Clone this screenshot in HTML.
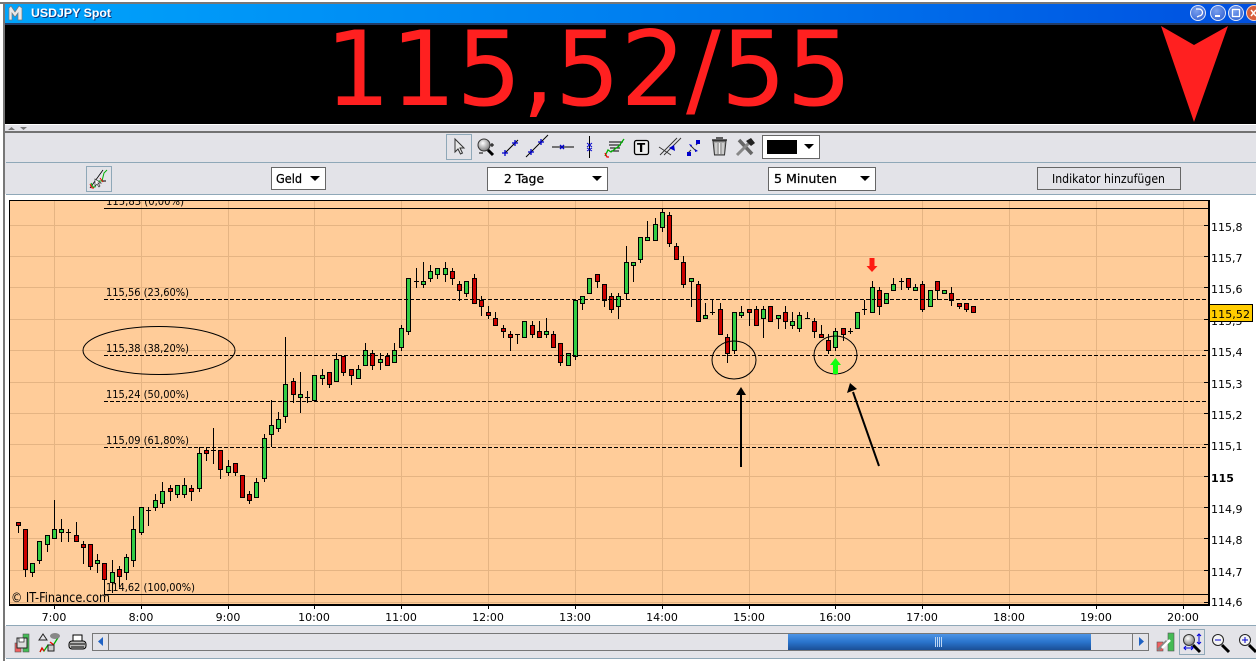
<!DOCTYPE html>
<html><head><meta charset="utf-8"><title>USDJPY Spot</title>
<style>html,body{margin:0;padding:0;background:#fff;width:1256px;height:661px;overflow:hidden}svg{display:block}text{font-family:"DejaVu Sans",sans-serif;fill:#000}</style></head>
<body>
<svg xmlns="http://www.w3.org/2000/svg" width="1256" height="661" viewBox="0 0 1256 661">
<defs>
<linearGradient id="tb" x1="0" x2="1" y1="0" y2="0"><stop offset="0" stop-color="#00a4fb"/><stop offset=".6" stop-color="#0078ee"/><stop offset="1" stop-color="#0050e0"/></linearGradient>
<linearGradient id="th" x1="0" x2="0" y1="0" y2="1"><stop offset="0" stop-color="#4d94e6"/><stop offset=".5" stop-color="#2a74cc"/><stop offset="1" stop-color="#1a4f96"/></linearGradient>
<radialGradient id="bt" cx=".4" cy=".35" r=".8"><stop offset="0" stop-color="#7aa0ee"/><stop offset="1" stop-color="#2a5cd0"/></radialGradient>
<radialGradient id="mg" cx=".4" cy=".35" r=".7"><stop offset="0" stop-color="#fff"/><stop offset="1" stop-color="#777"/></radialGradient>
<clipPath id="cb"><rect x="10" y="201" width="1198" height="403"/></clipPath>
</defs>
<rect width="1256" height="661" fill="#fff"/>
<rect x="0" y="2" width="1256" height="2" fill="#777"/>
<rect x="3" y="2" width="2" height="659" fill="#777"/>
<rect x="5" y="4" width="1251" height="20" fill="url(#tb)"/>
<rect x="5" y="23" width="1251" height="2" fill="#233c66"/>
<path d="M9 20V8l2-2 4 6 4-6 3 2v12h-4v-7l-3 4-3-4v7z" fill="#e8e8e8" stroke="#777" stroke-width=".7"/>
<text x="31" y="17" font-size="12" font-weight="bold" textLength="80" lengthAdjust="spacingAndGlyphs" style="fill:#10357a;font-family:'Liberation Sans',sans-serif" dx="1" dy="1">USDJPY Spot</text>
<text x="31" y="17" font-size="12" font-weight="bold" textLength="80" lengthAdjust="spacingAndGlyphs" style="fill:#fff;font-family:'Liberation Sans',sans-serif">USDJPY Spot</text>
<g stroke="#dfe8fa" stroke-width="1" fill="url(#bt)"><circle cx="1198" cy="13" r="7.5"/><circle cx="1218" cy="13" r="7.5"/><circle cx="1236" cy="13" r="7.5"/></g>
<circle cx="1254" cy="13" r="7.5" fill="#d8603c" stroke="#f0d8d0"/>
<path d="M1196 9h3a3 3 0 0 1 0 7l-2 1" fill="none" stroke="#fff" stroke-width="1.3"/>
<rect x="1215" y="15" width="5" height="2" fill="#fff"/>
<rect x="1232.5" y="9.500" width="7" height="7" fill="none" stroke="#fff" stroke-width="1.300"/>
<path d="M1251 10l5 6M1256 10l-5 6" stroke="#fff" stroke-width="1.500"/>
<rect x="5" y="25" width="1251" height="99" fill="#000"/>
<text x="325" y="105" font-size="103" textLength="527" lengthAdjust="spacingAndGlyphs" style="fill:#ff2020">115,52/55</text>
<polygon points="1161,26 1194,45 1228,26 1194,122" fill="#ff2020"/>
<rect x="5" y="125" width="1251" height="6" fill="#e3e3e8"/>
<path d="M8 130l3.500-3 3.500 3zM20 127h7l-3.500 3z" fill="#777"/>
<rect x="5" y="131" width="1251" height="2" fill="#727272"/>
<rect x="5" y="133" width="1251" height="61" fill="#e3e3e8"/>
<rect x="6" y="162" width="1250" height="1" fill="#8fa8b8"/>
<rect x="6" y="194" width="1250" height="1" fill="#8fa8b8"/>
<!-- main toolbar -->
<rect x="446.500" y="134.500" width="25" height="25" fill="#e3e3e8" stroke="#8fa8b8"/>
<path d="M455 139v13l3-3 2.500 5 2-1-2.500-5h4z" fill="#e8e8e8" stroke="#333"/>
<circle cx="484" cy="145" r="6" fill="url(#mg)" stroke="#333"/>
<path d="M488 150l5 5" stroke="#000" stroke-width="3"/>
<path d="M490 145h4M492 143v4M479 153h4" stroke="#000"/>
<path d="M505 153l13-13" stroke="#000"/>
<path d="M505 150v6M502 153h6M515 140v6M512 143h6" stroke="#00c" stroke-width="1.300"/>
<path d="M526 157l22-22" stroke="#000"/>
<path d="M531 149v6M528 152h6M541 139v6M538 142h6" stroke="#00c" stroke-width="1.300"/>
<path d="M552 147h22" stroke="#000"/>
<path d="M560 145l4 4M564 145l-4 4" stroke="#00c" stroke-width="1.300"/>
<path d="M589.500 136v22" stroke="#000"/>
<path d="M587 143l5 4M592 143l-5 4M587 148l5 3M592 148l-5 3" stroke="#00c" stroke-width="1"/>
<path d="M609 142h14M609 145h12M610 148h10M611 151h8" stroke="#000"/>
<path d="M605 156l3-6 3 2 4-3 4-3 5-7" fill="none" stroke="#00b000" stroke-width="1.300"/>
<path d="M605 153l2 4h2" fill="none" stroke="#e00" stroke-width="1.300"/>
<rect x="634.500" y="140.500" width="14" height="14" rx="2" fill="#eee" stroke="#000" stroke-width="1.300"/>
<text x="637" y="152" font-size="12" font-weight="bold">T</text>
<path d="M660 155l17-17M659 147l12 8M664 155l17-17" stroke="#333" stroke-width=".9"/>
<path d="M669 148l5-3 1 6z" fill="#00c"/>
<path d="M688 153l3-3M696 145l3-3M691 146l5 5" stroke="#333"/>
<rect x="687" y="152" width="4" height="4" fill="#00c"/><rect x="696" y="140" width="4" height="4" fill="#00c"/>
<path d="M695 149l3 2-3 1zM692 145l-3-1 2 3z" fill="#00c"/>
<path d="M713 141h13l-1.500 14h-10z" fill="#aaa" stroke="#333"/>
<path d="M716 143v11M719.500 143v11M723 143v11" stroke="#eee"/>
<path d="M712 140h15M716 138h7" stroke="#333" stroke-width="1.500"/>
<path d="M739 140l13 14" stroke="#666" stroke-width="3.500"/>
<path d="M737 155l12-12" stroke="#888" stroke-width="3"/>
<path d="M746 141l5-3 4 5-4 3z" fill="#222"/>
<rect x="762.500" y="135.500" width="57" height="23" fill="#fff" stroke="#666"/>
<rect x="767" y="140" width="30" height="14" fill="#000"/>
<path d="M804 144h10l-5 5z" fill="#000"/>
<!-- row 2 -->
<rect x="86.500" y="166.500" width="25" height="25" fill="#e3e3e8" stroke="#8fa8b8"/>
<path d="M90 188l13-18" stroke="#000" stroke-width=".8"/>
<path d="M99 181h7" stroke="#000"/>
<path d="M91 183l2 4h2l2-5 2-1h3l2-8 3-3" fill="none" stroke="#00b000"/>
<path d="M90 184l2 4h2M100 178l3 4" fill="none" stroke="#e00"/>
<path d="M95 179v7l2-2 2 3 1-1-2-3h3z" fill="#fff" stroke="#333" stroke-width=".7"/>
<g fill="#fff" stroke="#666"><rect x="271.500" y="167.500" width="54" height="22"/><rect x="487.500" y="167.500" width="120" height="23"/><rect x="768.500" y="167.500" width="107" height="23"/></g>
<text x="276" y="183" font-size="12" textLength="26" lengthAdjust="spacingAndGlyphs" stroke="#000" stroke-width=".25">Geld</text>
<path d="M310 176h10l-5 5z" fill="#000"/>
<text x="504" y="183" font-size="12" textLength="40" lengthAdjust="spacingAndGlyphs" stroke="#000" stroke-width=".25">2 Tage</text>
<path d="M592 176h10l-5 5z" fill="#000"/>
<text x="774" y="183" font-size="12" textLength="63" lengthAdjust="spacingAndGlyphs" stroke="#000" stroke-width=".25">5 Minuten</text>
<path d="M860 176h10l-5 5z" fill="#000"/>
<rect x="1037.500" y="167.500" width="143" height="22" fill="#e3e3e8" stroke="#666"/>
<text x="1052" y="183" font-size="12" textLength="113" lengthAdjust="spacingAndGlyphs">Indikator hinzufügen</text>
<!-- chart -->
<rect x="10" y="201" width="1198" height="403" fill="#ffcc99"/>
<g clip-path="url(#cb)">
<path d="M10 225.500H1208M10 256.500H1208M10 287.500H1208M10 319.500H1208M10 350.500H1208M10 382.500H1208M10 413.500H1208M10 444.500H1208M10 476.500H1208M10 507.500H1208M10 538.500H1208M10 570.500H1208M10 602.500H1208M54.500 201V604M141.500 201V604M228.500 201V604M314.500 201V604M401.500 201V604M488.500 201V604M575.500 201V604M662.500 201V604M749.500 201V604M835.500 201V604M922.500 201V604M1009.500 201V604M1096.500 201V604M1183.500 201V604" stroke="#e5b483" fill="none"/>
<text x="106" y="205" font-size="11" textLength="78" lengthAdjust="spacingAndGlyphs">115,83 (0,00%)</text>
<path fill="none" stroke="#000" d="M18.500 522V533M25.500 569V577M32.500 572V577M39.500 560V564M47.500 544V552M54.500 500V538M61.500 519V542M68.500 529V542M76.500 522V541M83.500 541V564M90.500 566V570M97.500 554V573M104.500 579V594M112.500 560V593M119.500 566V587M126.500 554V580M133.500 516V567M141.500 532V535M148.500 507V526M155.500 494V511M162.500 482V508M170.500 485V501M177.500 494V498M184.500 478V498M191.500 485V501M199.500 447V492M206.500 447V461M213.500 428V464M220.500 469V479M228.500 460V476M235.500 472V476M249.500 491V504M256.500 478V482M264.500 434V482M271.500 400V447M278.500 412V432M285.500 337V423M293.500 378V403M300.500 372V413M307.500 391V403M314.500 400V402M322.500 369V385M329.500 384V388M336.500 353V359M343.500 372V376M351.500 375V385M358.500 365V369M365.500 343V350M372.500 350V370M380.500 353V370M387.500 353V356M394.500 343V350M401.500 325V351M408.500 331V335M416.500 268V288M423.500 262V288M430.500 265V282M437.500 274V279M445.500 262V282M452.500 268V285M459.500 281V301M466.500 293V297M474.500 274V278M481.500 296V316M488.500 306V319M495.500 312V318M503.500 325V338M510.500 331V351M517.500 334V344M532.500 321V338M539.500 321V331M546.500 318V338M553.500 331V334M560.500 362V366M575.500 356V360M582.500 303V310M597.500 281V288M604.500 300V307M611.500 293V313M618.500 293V319M626.500 246V300M633.500 265V282M640.500 259V263M647.500 221V237M655.500 218V224M662.500 208V232M669.500 212V247M676.500 243V246M683.500 256V288M691.500 281V307M698.500 281V284M705.500 303V315M712.500 299V315M720.500 303V309M727.500 334V363M734.500 350V354M741.500 306V318M749.500 312V326M756.500 306V309M763.500 306V338M778.500 318V329M785.500 306V329M792.500 312V329M799.500 312V332M807.500 312V318M814.500 318V338M821.500 325V334M828.500 334V354M835.500 328V351M843.500 334V341M850.500 328V334M864.500 300V315M872.500 281V287M879.500 287V315M893.500 278V284M901.500 278V290M908.500 287V290M915.500 284V287M922.500 281V312M937.500 290V300M951.500 287V306M959.500 306V309M966.500 309V312M66 532.500h5M146 510.500h5M211 450.500h5M305 397.500h5M414 281.500h5M515 334.500h5M710 312.500h5M805 318.500h5M848 331.500h5M862 309.500h5M899 281.500h5"/>
<path fill="#33cc44" stroke="#000" d="M30.500 563.500V572.500h4V563.500zM37.500 541.500V560.500h4V541.500zM45.500 535.500V544.500h4V535.500zM52.500 529.500V538.500h4V529.500zM59.500 529.500V532.500h4V529.500zM95.500 560.500V563.500h4V560.500zM110.500 572.500V582.500h4V572.500zM124.500 557.500V572.500h4V557.500zM131.500 529.500V560.500h4V529.500zM139.500 507.500V532.500h4V507.500zM153.500 500.500V507.500h4V500.500zM160.500 491.500V503.500h4V491.500zM175.500 485.500V494.500h4V485.500zM182.500 485.500V494.500h4V485.500zM197.500 453.500V488.500h4V453.500zM226.500 466.500V472.500h4V466.500zM254.500 482.500V497.500h4V482.500zM262.500 438.500V478.500h4V438.500zM269.500 425.500V434.500h4V425.500zM276.500 419.500V428.500h4V419.500zM283.500 384.500V416.500h4V384.500zM298.500 394.500V397.500h4V394.500zM312.500 375.500V400.500h4V375.500zM320.500 375.500V378.500h4V375.500zM334.500 359.500V381.500h4V359.500zM356.500 369.500V378.500h4V369.500zM363.500 350.500V365.500h4V350.500zM378.500 359.500V362.500h4V359.500zM392.500 350.500V362.500h4V350.500zM399.500 328.500V347.500h4V328.500zM406.500 278.500V331.500h4V278.500zM421.500 281.500V284.500h4V281.500zM428.500 271.500V278.500h4V271.500zM435.500 268.500V274.500h4V268.500zM443.500 268.500V274.500h4V268.500zM464.500 281.500V293.500h4V281.500zM522.500 321.500V337.500h4V321.500zM544.500 331.500V334.500h4V331.500zM566.500 353.500V365.500h4V353.500zM573.500 300.500V356.500h4V300.500zM580.500 296.500V303.500h4V296.500zM587.500 278.500V293.500h4V278.500zM616.500 296.500V306.500h4V296.500zM624.500 262.500V293.500h4V262.500zM631.500 262.500V265.500h4V262.500zM638.500 237.500V259.500h4V237.500zM645.500 237.500V240.500h4V237.500zM653.500 224.500V240.500h4V224.500zM660.500 212.500V227.500h4V212.500zM689.500 278.500V281.500h4V278.500zM703.500 315.500V318.500h4V315.500zM732.500 312.500V350.500h4V312.500zM739.500 312.500V315.500h4V312.500zM761.500 309.500V318.500h4V309.500zM776.500 315.500V318.500h4V315.500zM790.500 321.500V325.500h4V321.500zM797.500 315.500V328.500h4V315.500zM833.500 331.500V347.500h4V331.500zM855.500 312.500V328.500h4V312.500zM870.500 287.500V312.500h4V287.500zM884.500 293.500V303.500h4V293.500zM891.500 284.500V290.500h4V284.500zM913.500 287.500V290.500h4V287.500zM928.500 290.500V306.500h4V290.500zM942.500 290.500V293.500h4V290.500z"/>
<path fill="#cc0000" stroke="#000" d="M16.500 522.500V525.500h4V522.500zM23.500 529.500V569.500h4V529.500zM74.500 535.500V541.500h4V535.500zM81.500 544.500V547.500h4V544.500zM88.500 544.500V566.500h4V544.500zM102.500 563.500V579.500h4V563.500zM117.500 569.500V576.500h4V569.500zM168.500 488.500V491.500h4V488.500zM189.500 488.500V491.500h4V488.500zM204.500 450.500V453.500h4V450.500zM218.500 450.500V469.500h4V450.500zM233.500 463.500V472.500h4V463.500zM240.500 475.500V497.500h4V475.500zM247.500 494.500V500.500h4V494.500zM291.500 381.500V394.500h4V381.500zM327.500 372.500V384.500h4V372.500zM341.500 356.500V372.500h4V356.500zM349.500 369.500V375.500h4V369.500zM370.500 353.500V365.500h4V353.500zM385.500 356.500V365.500h4V356.500zM450.500 271.500V278.500h4V271.500zM457.500 284.500V290.500h4V284.500zM472.500 278.500V303.500h4V278.500zM479.500 300.500V306.500h4V300.500zM486.500 312.500V315.500h4V312.500zM493.500 318.500V325.500h4V318.500zM501.500 328.500V331.500h4V328.500zM508.500 334.500V337.500h4V334.500zM530.500 325.500V334.500h4V325.500zM537.500 331.500V337.500h4V331.500zM551.500 334.500V347.500h4V334.500zM558.500 343.500V362.500h4V343.500zM595.500 274.500V281.500h4V274.500zM602.500 284.500V300.500h4V284.500zM609.500 296.500V309.500h4V296.500zM667.500 215.500V243.500h4V215.500zM674.500 246.500V259.500h4V246.500zM681.500 262.500V284.500h4V262.500zM696.500 284.500V321.500h4V284.500zM718.500 309.500V334.500h4V309.500zM725.500 337.500V353.500h4V337.500zM747.500 309.500V312.500h4V309.500zM754.500 309.500V325.500h4V309.500zM768.500 306.500V321.500h4V306.500zM783.500 312.500V321.500h4V312.500zM812.500 321.500V331.500h4V321.500zM819.500 334.500V337.500h4V334.500zM826.500 340.500V350.500h4V340.500zM841.500 328.500V334.500h4V328.500zM877.500 290.500V306.500h4V290.500zM906.500 278.500V287.500h4V278.500zM920.500 284.500V309.500h4V284.500zM935.500 281.500V290.500h4V281.500zM949.500 293.500V300.500h4V293.500zM957.500 303.500V306.500h4V303.500zM964.500 303.500V309.500h4V303.500zM971.500 306.500V312.500h4V306.500z"/>
<path d="M104 208.500H1208M104 594.500H1208" stroke="#000" fill="none"/>
<path d="M104 299.500H1208M104 355.500H1208M104 401.500H1208M104 447.500H1208" stroke="#000" stroke-dasharray="4 2" fill="none"/>
<g font-size="11">
<text x="106" y="296" textLength="83" lengthAdjust="spacingAndGlyphs">115,56 (23,60%)</text>
<text x="106" y="352" textLength="83" lengthAdjust="spacingAndGlyphs">115,38 (38,20%)</text>
<text x="106" y="398" textLength="83" lengthAdjust="spacingAndGlyphs">115,24 (50,00%)</text>
<text x="106" y="444" textLength="83" lengthAdjust="spacingAndGlyphs">115,09 (61,80%)</text>
<text x="106" y="591" textLength="89" lengthAdjust="spacingAndGlyphs">114,62 (100,00%)</text>
</g>
<text x="11" y="602" font-size="13" textLength="99" lengthAdjust="spacingAndGlyphs">© IT-Finance.com</text>
<g fill="none" stroke="#000" stroke-width="1"><ellipse cx="159" cy="350.500" rx="76" ry="24"/><ellipse cx="734" cy="360" rx="22" ry="19"/><ellipse cx="835.500" cy="355" rx="21.500" ry="19"/></g>
<path d="M741 467V392" stroke="#000" stroke-width="2"/>
<path d="M736 395l5-8 5 8z" fill="#000"/>
<path d="M879 466L853 392" stroke="#000" stroke-width="2"/>
<path d="M847 393l3-10 7 6z" fill="#000"/>
<path d="M869.500 258h5v8h3l-5.500 6-5.500-6h3z" fill="#ff1a10"/>
<path d="M833 374v-9h-3l5.500-7 5.500 7h-3v9z" fill="#10ff10"/>
</g>
<!-- frame -->
<rect x="9" y="200" width="1" height="405" fill="#000"/>
<rect x="9" y="200" width="1200" height="1" fill="#000"/>
<rect x="1208" y="200" width="2" height="406" fill="#000"/>
<rect x="9" y="604" width="1201" height="2" fill="#000"/>
<path d="M54.500 606v3M141.500 606v3M228.500 606v3M314.500 606v3M401.500 606v3M488.500 606v3M575.500 606v3M662.500 606v3M749.500 606v3M835.500 606v3M922.500 606v3M1009.500 606v3M1096.500 606v3M1183.500 606v3" stroke="#000"/>
<path d="M1204 225.500h4M1204 256.500h4M1204 287.500h4M1204 319.500h4M1204 350.500h4M1204 382.500h4M1204 413.500h4M1204 444.500h4M1204 476.500h4M1204 507.500h4M1204 538.500h4M1204 570.500h4M1204 602.500h4" stroke="#000"/>
<g font-size="11">
<text x="1211" y="231">115,8</text><text x="1211" y="262">115,7</text><text x="1211" y="293">115,6</text><text x="1211" y="325">115,5</text><text x="1211" y="356">115,4</text><text x="1211" y="388">115,3</text><text x="1211" y="419">115,2</text><text x="1211" y="450">115,1</text><text x="1211" y="482" font-weight="bold">115</text><text x="1211" y="513">114,9</text><text x="1211" y="544">114,8</text><text x="1211" y="576">114,7</text><text x="1211" y="606">114,6</text>
</g>
<rect x="1209.500" y="304.500" width="43" height="17" fill="#ffcc00" stroke="#000"/>
<text x="1211" y="318" font-size="11" textLength="39">115,52</text>
<g font-size="11" text-anchor="middle">
<text x="54" y="621">7:00</text><text x="141" y="621">8:00</text><text x="228" y="621">9:00</text><text x="314" y="621">10:00</text><text x="401" y="621">11:00</text><text x="488" y="621">12:00</text><text x="575" y="621">13:00</text><text x="662" y="621">14:00</text><text x="749" y="621">15:00</text><text x="835" y="621">16:00</text><text x="922" y="621">17:00</text><text x="1009" y="621">18:00</text><text x="1096" y="621">19:00</text><text x="1183" y="621">20:00</text>
</g>
<!-- bottom toolbar -->
<rect x="5" y="626" width="1251" height="32" fill="#e3e3e8"/>
<rect x="6" y="625" width="1250" height="1" fill="#8fa8b8"/>
<rect x="6" y="658" width="1250" height="1" fill="#8fa8b8"/>
<rect x="15" y="643" width="6" height="9" fill="#f06060" stroke="#555" stroke-width=".6"/>
<rect x="23" y="634" width="6" height="18" fill="#44bb55" stroke="#555" stroke-width=".6"/>
<rect x="17" y="638" width="10" height="10" fill="#ddd" stroke="#222"/>
<rect x="19" y="638" width="5" height="4" fill="#fff" stroke="#222" stroke-width=".7"/>
<path d="M39 640l4-6 4 6z" fill="#e3e3e8" stroke="#222"/>
<path d="M40 652l2-4 2 3 4-6 3 3 3-4 5-8" fill="none" stroke="#00b000" stroke-width="1.300"/>
<path d="M40 652l2-4 2 3M50 642l4 3" fill="none" stroke="#e00" stroke-width="1.300"/>
<ellipse cx="55" cy="636" rx="5" ry="3" fill="#888"/>
<rect x="48" y="645" width="6" height="6" fill="#ccc" stroke="#222"/>
<rect x="73" y="635" width="9" height="6" fill="#fff" stroke="#000"/>
<rect x="69" y="641" width="17" height="8" rx="3" fill="#bbb" stroke="#000"/>
<path d="M70 644h15M71 647h13" stroke="#000"/>
<rect x="92.500" y="633.500" width="1056" height="17" fill="#e3e3e8" stroke="#777"/>
<rect x="92.500" y="633.500" width="16" height="17" fill="#e3e3e8" stroke="#777"/>
<path d="M103 637v9l-5-4.500z" fill="#1f62c4"/>
<rect x="788" y="634" width="303" height="16" fill="url(#th)"/>
<path d="M935.500 637v10M937.500 637v10M939.500 637v10M941.500 637v10" stroke="#bcd6f4"/>
<rect x="1132.500" y="633.500" width="16" height="17" fill="#e3e3e8" stroke="#777"/>
<path d="M1139 637v9l5-4.500z" fill="#1f62c4"/>
<rect x="1168" y="633" width="6" height="18" fill="#44bb55" stroke="#555" stroke-width=".6"/>
<rect x="1157" y="642" width="6" height="9" fill="#f06060" stroke="#555" stroke-width=".6"/>
<path d="M1158 650l9-9" stroke="#888" stroke-width="3"/>
<path d="M1162 648l8-8" stroke="#fff" stroke-width="2.500"/>
<rect x="1179.500" y="629.500" width="25" height="25" fill="#e3e3e8" stroke="#8fa8b8"/>
<circle cx="1189" cy="640" r="5.500" fill="url(#mg)" stroke="#333"/>
<path d="M1193 645l7 7" stroke="#000" stroke-width="3"/>
<path d="M1199 634v10M1197 636l2-2 2 2M1197 642l2 2 2-2M1184 648h9M1186 646l-2 2 2 2M1191 646l2 2-2 2" stroke="#00d" fill="none"/>
<circle cx="1218" cy="640" r="5.500" fill="#f4f4f4" stroke="#222"/>
<path d="M1215 640h6" stroke="#00c"/>
<path d="M1222 645l7 7" stroke="#000" stroke-width="3"/>
<circle cx="1245" cy="640" r="5.500" fill="#f4f4f4" stroke="#222"/>
<path d="M1242 640h6M1245 637v6" stroke="#00c"/>
<path d="M1249 645l7 7" stroke="#000" stroke-width="3"/>
</svg>
</body></html>
